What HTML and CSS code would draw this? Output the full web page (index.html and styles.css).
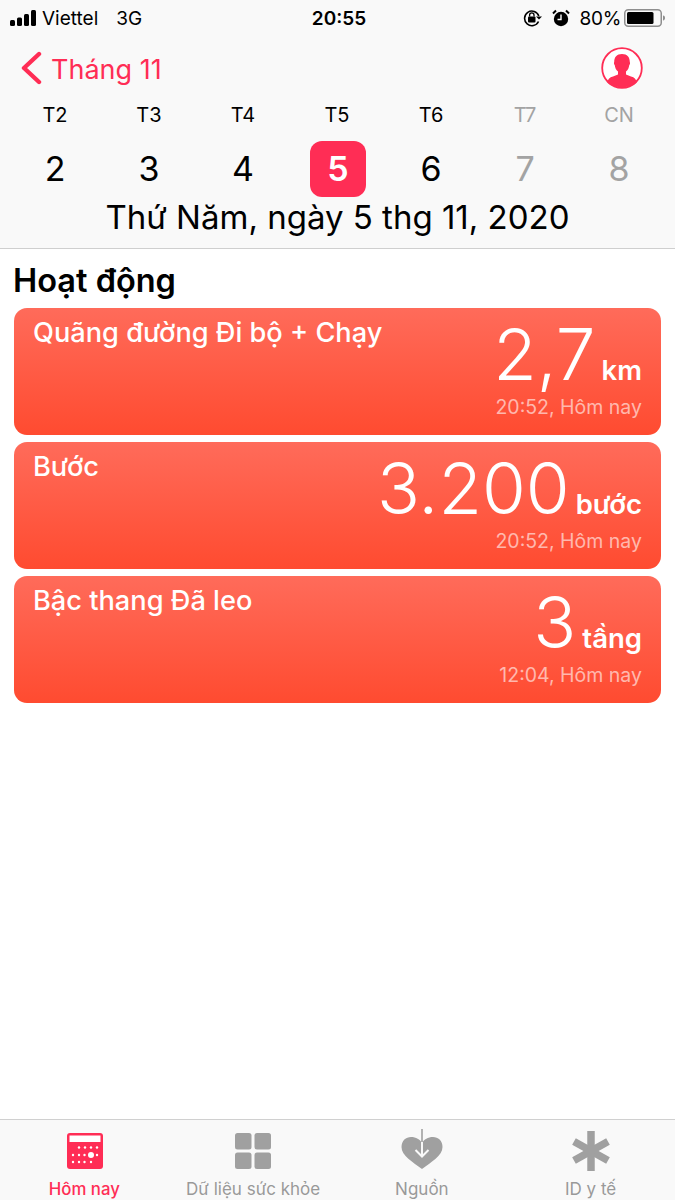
FILE: index.html

```html
<!DOCTYPE html>
<html>
	<head>
		<meta charset="utf-8" />
		<title>Sức khỏe</title>
		<link rel="stylesheet" href="styles.css">
	</head>
	<body>
		<div class="screen">
			<div class="top">
				<div class="status">
					<div class="status-left">
						<svg class="signal" width="26" height="16" viewBox="0 0 26 16">
							<rect x="0" y="10" width="5" height="6" rx="1.5" />
							<rect x="7" y="7.5" width="5" height="8.5" rx="1.5" />
							<rect x="14" y="4" width="5" height="12" rx="1.5" />
							<rect x="21" y="0" width="5" height="16" rx="1.5" />
						</svg>
						<span>Viettel</span>
						<span class="net">3G</span>
					</div>
					<div class="status-time">20:55</div>
					<div class="status-right">
						<svg class="lock" width="20" height="18" viewBox="0 0 20 18">
							<path d="M15.5 12.5A7.3 7.3 0 1 1 15.8 7" fill="none" stroke="#000" stroke-width="1.6" />
							<path d="M13 7.4h6l-3 3.2z" fill="#000" />
							<rect x="5" y="7.5" width="7.5" height="6" rx="1" fill="#000" />
							<path d="M6.6 7.5V6a2.2 2.2 0 0 1 4.4 0v1.5" fill="none" stroke="#000" stroke-width="1.3" />
						</svg>
						<svg class="alarm" width="18" height="18" viewBox="0 0 18 18">
							<circle cx="9" cy="10" r="7.2" fill="#000" />
							<path d="M9 5.5V10.5H5.5" fill="none" stroke="#fff" stroke-width="1.4" />
							<path d="M1 4.5L4 1.5M17 4.5L14 1.5" stroke="#000" stroke-width="2" />
						</svg>
						<span class="percent">80%</span>
						<svg class="battery" width="42" height="18" viewBox="0 0 42 18">
							<rect x="0.75" y="0.75" width="36.5" height="16.5" rx="3.5" fill="none" stroke="#8e8e8e" stroke-width="1.5" />
							<rect x="3" y="3" width="26.5" height="12" rx="1.5" fill="#000" />
							<path d="M39 6.5c1.5.3 2 1.2 2 2.5s-.5 2.2-2 2.5z" fill="#8e8e8e" />
						</svg>
					</div>
				</div>

				<div class="nav">
					<div class="back">
						<svg width="22" height="34" viewBox="0 0 22 34">
							<path d="M19 3L4 17l15 14" fill="none" stroke="#ff2d55" stroke-width="4.4" stroke-linecap="round" stroke-linejoin="round" />
						</svg>
						<span>Tháng 11</span>
					</div>
					<svg class="profile" width="42" height="42" viewBox="0 0 42 42">
						<circle cx="21" cy="21" r="19.8" fill="#fff" stroke="#ff2d55" stroke-width="1.8" />
						<path d="M14 39.5C10 38.5 7 36.5 6.500 35c.5-3 2-4.500 5.500-5.500l5-2v-3c-2-1.500-3-4-3.300-6.500-.7-.5-1-2-.5-3 0-5 2.500-8 7.800-8s7.800 3 7.800 8c.5 1 .2 2.500-.5 3-.3 2.500-1.300 5-3.300 6.500v3l5 2c3.500 1 5 2.500 5.500 5.500-.5 1.500-3.500 3.500-7.500 4.500-4.500 1-9.500 1-14 0z" fill="#ff2d55" />
					</svg>
				</div>

				<div class="week">
					<div class="day"><span class="day-name">T2</span><span class="day-num">2</span></div>
					<div class="day"><span class="day-name">T3</span><span class="day-num">3</span></div>
					<div class="day"><span class="day-name">T4</span><span class="day-num">4</span></div>
					<div class="day"><span class="day-name">T5</span><span class="day-num today">5</span></div>
					<div class="day"><span class="day-name">T6</span><span class="day-num">6</span></div>
					<div class="day off"><span class="day-name">T7</span><span class="day-num">7</span></div>
					<div class="day off"><span class="day-name">CN</span><span class="day-num">8</span></div>
				</div>
				<div class="date">Thứ Năm, ngày 5 thg 11, 2020</div>
			</div>

			<div class="content">
				<h1>Hoạt động</h1>
				<div class="card">
					<div class="card-title">Quãng đường Đi bộ + Chạy</div>
					<div class="card-info">
						<div class="reading"><span class="value">2,7</span><span class="unit">km</span></div>
						<div class="when">20:52, Hôm nay</div>
					</div>
				</div>
				<div class="card">
					<div class="card-title">Bước</div>
					<div class="card-info">
						<div class="reading"><span class="value">3.200</span><span class="unit">bước</span></div>
						<div class="when">20:52, Hôm nay</div>
					</div>
				</div>
				<div class="card">
					<div class="card-title">Bậc thang Đã leo</div>
					<div class="card-info">
						<div class="reading"><span class="value">3</span><span class="unit">tầng</span></div>
						<div class="when">12:04, Hôm nay</div>
					</div>
				</div>
			</div>

			<div class="tabs">
				<div class="tab active">
					<div class="tab-icon">
						<svg class="calendar" width="36" height="36" viewBox="0 0 36 36">
							<rect width="36" height="36" rx="3" fill="#ff2d55" />
							<rect x="2.500" y="2.500" width="31" height="6.500" fill="#fff" />
							<g fill="#fff">
								<circle cx="12" cy="14.500" r="1.200" /><circle cx="18" cy="14.500" r="1.200" /><circle cx="24" cy="14.500" r="1.200" /><circle cx="30" cy="14.500" r="1.200" />
								<circle cx="6" cy="22" r="1.200" /><circle cx="12" cy="22" r="1.200" /><circle cx="17.500" cy="22" r="1.200" /><circle cx="24" cy="22" r="3" /><circle cx="30" cy="22" r="1.200" />
								<circle cx="6" cy="29" r="1.200" /><circle cx="12" cy="29" r="1.200" /><circle cx="17.500" cy="29" r="1.200" /><circle cx="24" cy="29" r="1.200" />
							</g>
						</svg>
					</div>
					<span>Hôm nay</span>
				</div>
				<div class="tab">
					<div class="tab-icon">
						<svg width="36" height="36" viewBox="0 0 36 36">
							<rect width="16.500" height="16.500" rx="2.500" fill="#a0a0a0" />
							<rect x="19.500" width="16.500" height="16.500" rx="2.500" fill="#a0a0a0" />
							<rect y="19.500" width="16.500" height="16.500" rx="2.500" fill="#a0a0a0" />
							<rect x="19.500" y="19.500" width="16.500" height="16.500" rx="2.500" fill="#a0a0a0" />
						</svg>
					</div>
					<span>Dữ liệu sức khỏe</span>
				</div>
				<div class="tab">
					<div class="tab-icon">
						<svg class="heart" width="42" height="40" viewBox="0 0 42 40">
							<path d="M21 40C12 33 .5 27 .5 18 .5 11.500 5 8 10 8c5 0 9 2.500 11 6 2-3.500 6-6 11-6 5 0 9.500 3.500 9.500 10 0 9-11.500 15-20.500 22z" fill="#a0a0a0" />
							<path d="M21 0v13" fill="none" stroke="#a0a0a0" stroke-width="1.600" />
							<path d="M21 13v14.500M14.500 21l6.500 6.500 6.500-6.500" fill="none" stroke="#f9f9f9" stroke-width="2" />
						</svg>
					</div>
					<span>Nguồn</span>
				</div>
				<div class="tab">
					<div class="tab-icon">
						<svg width="40" height="42" viewBox="0 0 40 42">
							<g stroke="#a0a0a0" stroke-width="7.500">
								<path d="M20 1v40" />
								<path d="M3 11.500l34 19" />
								<path d="M37 11.500l-34 19" />
							</g>
						</svg>
					</div>
					<span>ID y tế</span>
				</div>
			</div>
		</div>
	</body>
</html>
```

FILE: styles.css

```css
* {
  box-sizing: border-box;
  font-family: Inter, "Noto Sans", sans-serif;
}

html, body {
  margin: 0;
  padding: 0;
}

.screen {
  width: 675px;
  height: 1200px;
  display: flex;
  flex-direction: column;
  background: #fff;
  overflow: hidden;
}

/* top bar */
.top {
  height: 249px;
  background: #f9f9f9;
  border-bottom: 1px solid #cfcfcf;
}

.status {
  height: 36px;
  padding: 0 9px 0 10px;
  display: grid;
  grid-template-columns: 1fr auto 1fr;
  align-items: center;
  font-size: 19px;
  color: #000;
}

.status-left {
  display: flex;
  align-items: center;
  gap: 6px;
}

.status-left .net {
  margin-left: 12px;
}

.status-time {
  font-weight: 600;
  font-size: 19px;
  transform: translateX(1px);
}

.status-right {
  display: flex;
  align-items: center;
  justify-content: flex-end;
  gap: 8px;
}

.status-right .alarm {
  margin: 0 2px 0 1px;
}

.status-right .percent {
  letter-spacing: -0.3px;
  margin-right: -5px;
}

.nav {
  height: 60px;
  padding: 3px 32px 0 20px;
  display: flex;
  align-items: center;
  justify-content: space-between;
}

.back {
  display: flex;
  align-items: center;
  gap: 9px;
  color: #ff2d55;
  font-size: 27px;
}

.back span {
  margin-top: 3px;
}

.week {
  padding: 0 9px 0 8px;
  display: grid;
  grid-template-columns: repeat(7, 1fr);
}

.day {
  display: flex;
  flex-direction: column;
  align-items: center;
  color: #000;
}

.day.off {
  color: #a3a3a3;
}

.day-name {
  height: 36px;
  line-height: 38px;
  font-size: 20px;
}

.day-num {
  width: 56px;
  height: 56px;
  margin-top: 9px;
  line-height: 56px;
  text-align: center;
  font-size: 34px;
  border-radius: 12px;
}

.day-num.today {
  background: #ff2d55;
  color: #fff;
  font-weight: 600;
  transform: translateX(1px);
}

.date {
  height: 47px;
  line-height: 40px;
  text-align: center;
  font-size: 33px;
  color: #000;
}

/* activity cards */
.content {
  flex: 1;
  padding: 0 14px;
}

h1 {
  margin: 0 0 0 -1px;
  height: 59px;
  line-height: 64px;
  font-size: 32.5px;
  font-weight: 600;
  color: #000;
}

.card {
  height: 127px;
  margin-bottom: 7px;
  padding: 9px 19px 0;
  display: flex;
  justify-content: space-between;
  border-radius: 13px;
  background: linear-gradient(#ff6b5a, #ff4b30);
  color: #fff;
}

.card-title {
  font-size: 27.2px;
  font-weight: 500;
  line-height: 32px;
}

.card-info {
  margin-top: 3px;
  display: flex;
  flex-direction: column;
  align-items: flex-end;
}

.reading {
  height: 68px;
  display: flex;
  align-items: baseline;
  gap: 6px;
}

.value {
  display: block;
  font-size: 71px;
  font-weight: 300;
  line-height: 68px;
}

.unit {
  font-size: 27.5px;
  font-weight: 600;
}

.when {
  margin-top: 6px;
  font-size: 19.5px;
  line-height: 26px;
  color: rgba(255, 255, 255, 0.6);
}

/* tab bar */
.tabs {
  height: 81px;
  background: #f9f9f9;
  border-top: 1px solid #d0d0d0;
  display: grid;
  grid-template-columns: repeat(4, 1fr);
}

.tab {
  display: flex;
  flex-direction: column;
  align-items: center;
  color: #999;
  font-size: 17px;
  line-height: 22px;
  padding-top: 8px;
}

.tab-icon {
  height: 50px;
  padding-bottom: 4px;
  display: flex;
  align-items: center;
  justify-content: center;
}

.tab-icon .heart {
  margin-bottom: 4px;
}

.tab-icon .calendar {
  margin-left: 1px;
}

.tab.active {
  color: #ff2d55;
  font-size: 16.8px;
  font-weight: 500;
}
```
